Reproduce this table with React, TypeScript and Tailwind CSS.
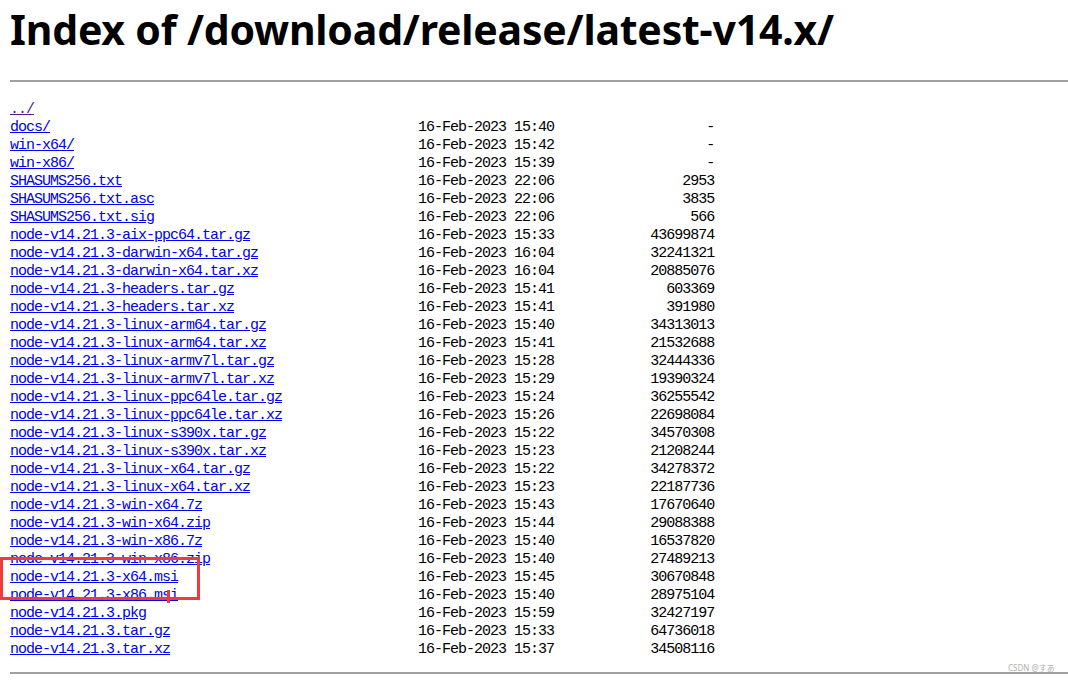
import React from "react";

const rows: [string, string, string][] = [
  ["docs/", "16-Feb-2023 15:40", "-"],
  ["win-x64/", "16-Feb-2023 15:42", "-"],
  ["win-x86/", "16-Feb-2023 15:39", "-"],
  ["SHASUMS256.txt", "16-Feb-2023 22:06", "2953"],
  ["SHASUMS256.txt.asc", "16-Feb-2023 22:06", "3835"],
  ["SHASUMS256.txt.sig", "16-Feb-2023 22:06", "566"],
  ["node-v14.21.3-aix-ppc64.tar.gz", "16-Feb-2023 15:33", "43699874"],
  ["node-v14.21.3-darwin-x64.tar.gz", "16-Feb-2023 16:04", "32241321"],
  ["node-v14.21.3-darwin-x64.tar.xz", "16-Feb-2023 16:04", "20885076"],
  ["node-v14.21.3-headers.tar.gz", "16-Feb-2023 15:41", "603369"],
  ["node-v14.21.3-headers.tar.xz", "16-Feb-2023 15:41", "391980"],
  ["node-v14.21.3-linux-arm64.tar.gz", "16-Feb-2023 15:40", "34313013"],
  ["node-v14.21.3-linux-arm64.tar.xz", "16-Feb-2023 15:41", "21532688"],
  ["node-v14.21.3-linux-armv7l.tar.gz", "16-Feb-2023 15:28", "32444336"],
  ["node-v14.21.3-linux-armv7l.tar.xz", "16-Feb-2023 15:29", "19390324"],
  ["node-v14.21.3-linux-ppc64le.tar.gz", "16-Feb-2023 15:24", "36255542"],
  ["node-v14.21.3-linux-ppc64le.tar.xz", "16-Feb-2023 15:26", "22698084"],
  ["node-v14.21.3-linux-s390x.tar.gz", "16-Feb-2023 15:22", "34570308"],
  ["node-v14.21.3-linux-s390x.tar.xz", "16-Feb-2023 15:23", "21208244"],
  ["node-v14.21.3-linux-x64.tar.gz", "16-Feb-2023 15:22", "34278372"],
  ["node-v14.21.3-linux-x64.tar.xz", "16-Feb-2023 15:23", "22187736"],
  ["node-v14.21.3-win-x64.7z", "16-Feb-2023 15:43", "17670640"],
  ["node-v14.21.3-win-x64.zip", "16-Feb-2023 15:44", "29088388"],
  ["node-v14.21.3-win-x86.7z", "16-Feb-2023 15:40", "16537820"],
  ["node-v14.21.3-win-x86.zip", "16-Feb-2023 15:40", "27489213"],
  ["node-v14.21.3-x64.msi", "16-Feb-2023 15:45", "30670848"],
  ["node-v14.21.3-x86.msi", "16-Feb-2023 15:40", "28975104"],
  ["node-v14.21.3.pkg", "16-Feb-2023 15:59", "32427197"],
  ["node-v14.21.3.tar.gz", "16-Feb-2023 15:33", "64736018"],
  ["node-v14.21.3.tar.xz", "16-Feb-2023 15:37", "34508116"],
];

export default function App() {
  return (
    <div className="relative min-h-[683px] bg-white pl-[10px] text-black">
      {/* Title */}
      <h1 className="pt-[3px] font-['Noto_Sans',sans-serif] text-[41px] font-bold leading-[52px] tracking-[-0.2px]">
        Index of /download/release/latest-v14.x/
      </h1>
      <div className="mt-[25px] h-[2px] bg-[#a0a0a0]" />

      {/* Listing */}
      <pre className="mt-[19px] font-['Liberation_Mono',monospace] text-[15px] leading-[18px] tracking-[-1px]">
        <a href="#" className="text-[#551a8b] underline">
          ../
        </a>
        {"\n"}
        {rows.map(([name, date, size]) => (
          <React.Fragment key={name}>
            <a href="#" className="text-[#0000ee] underline">
              {name}
            </a>
            {" ".repeat(51 - name.length)}
            {date}
            {size.padStart(20, " ")}
            {"\n"}
          </React.Fragment>
        ))}
      </pre>
      <div className="mt-[13px] h-[2px] bg-[#a0a0a0]" />

      {/* Annotation */}
      <div className="absolute left-0 top-[557px] h-[43px] w-[200px] border-[3px] border-[#ef3b3b]" />
      <div className="absolute left-[167px] top-[590px] h-[13px] w-[3px] bg-[#ef3b3b]" />

      {/* Watermark */}
      <div className="absolute left-[1008px] top-[663px] font-['Noto_Sans','Noto_Sans_CJK_JP',sans-serif] text-[8px] leading-[10px] text-[#b0b0b0]">
        CSDN @すあ
      </div>
    </div>
  );
}
